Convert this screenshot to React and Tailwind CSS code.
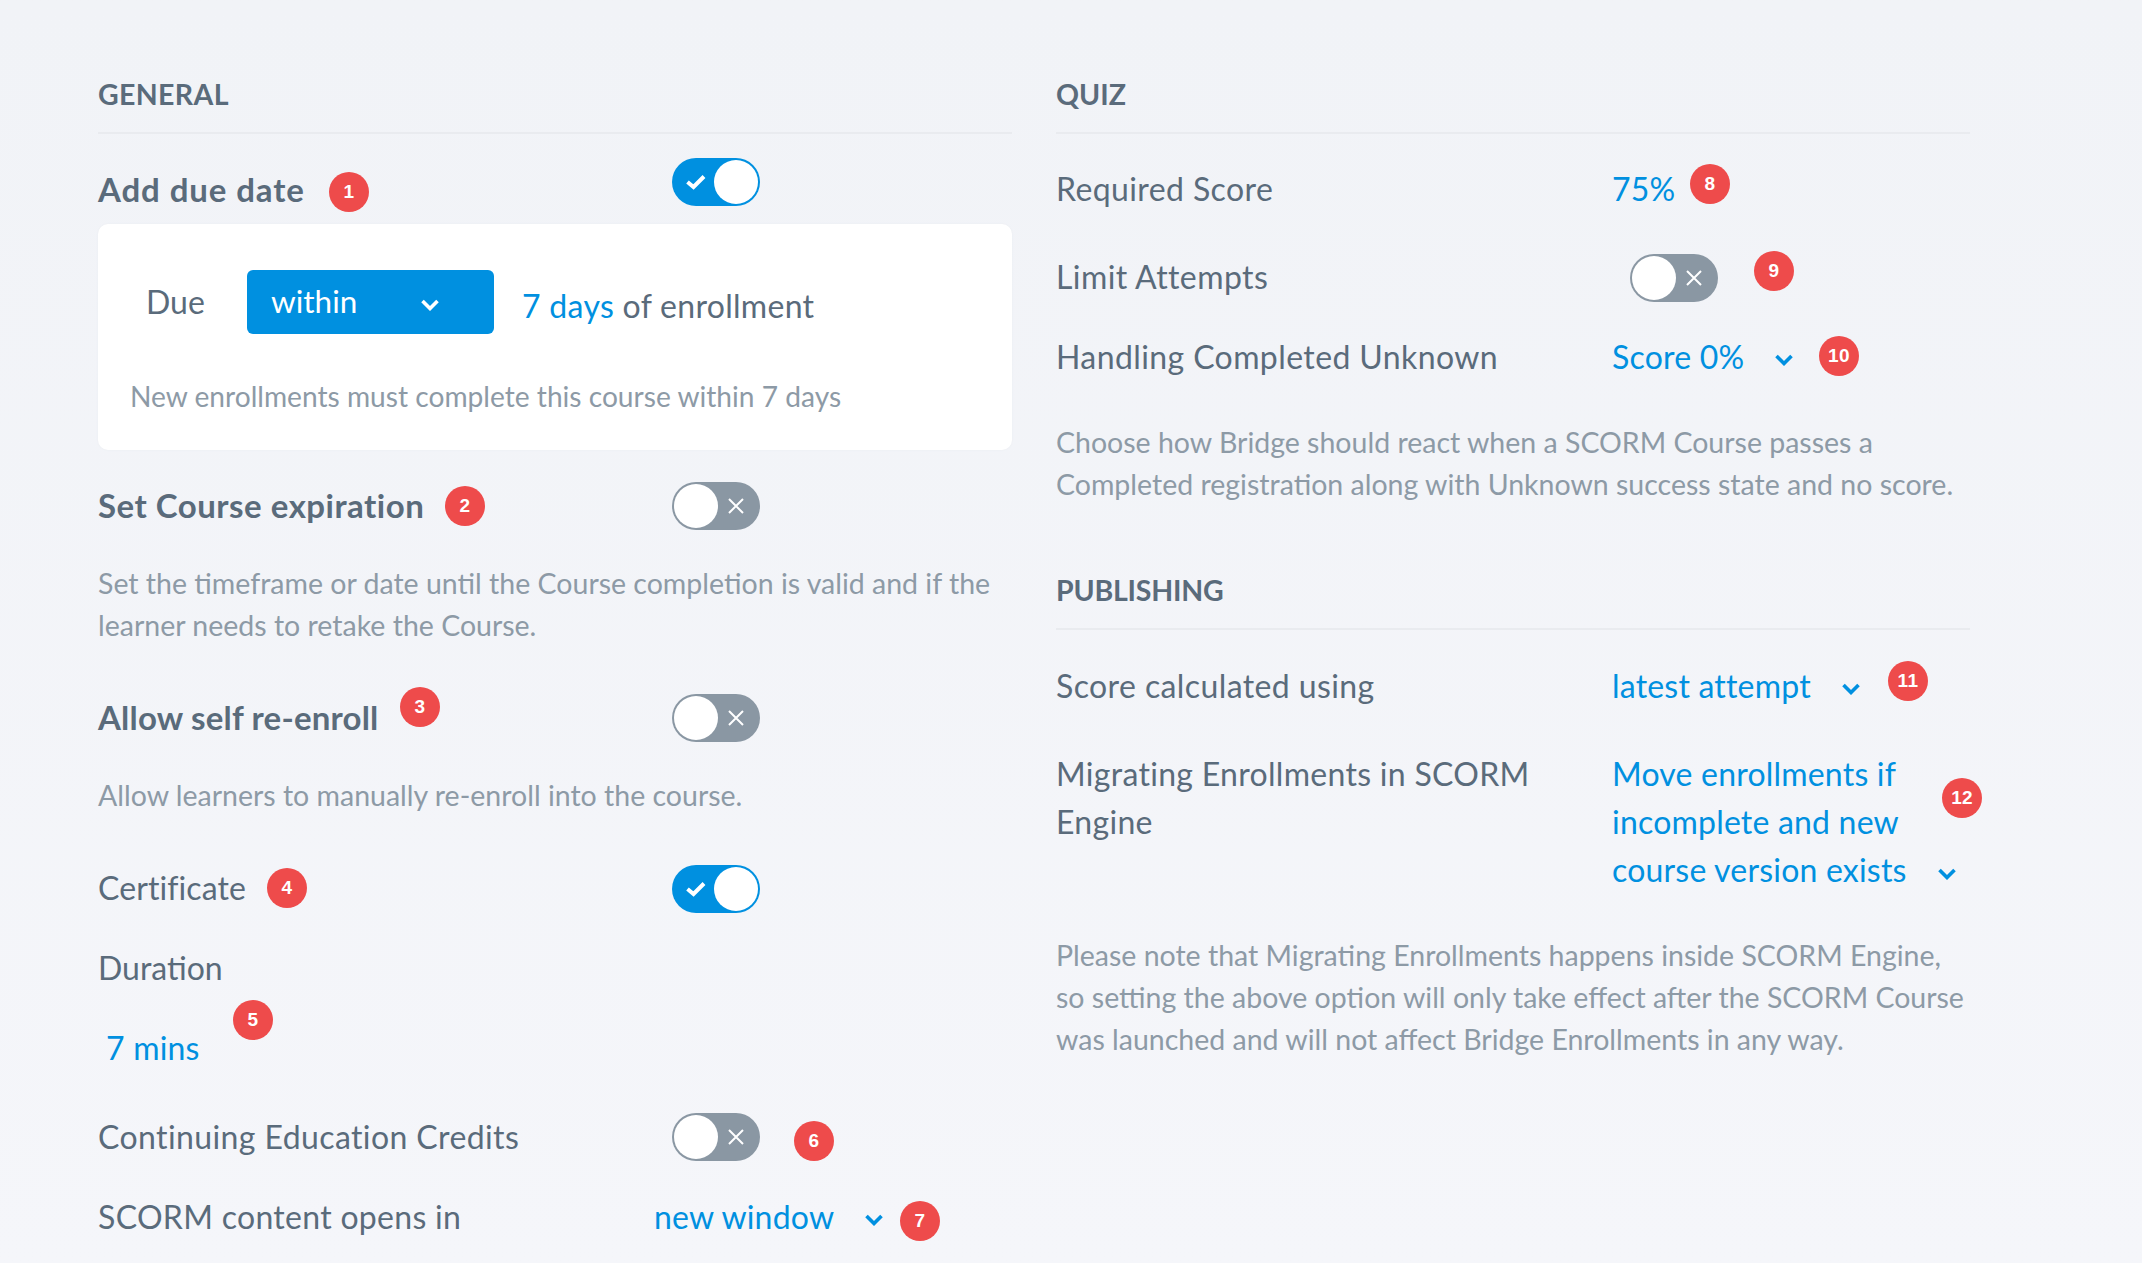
const FONT = "font-['Lato','Noto_Sans',sans-serif]";

function Badge({ n, className }) {
  return (
    <span className={"absolute flex h-10 w-10 items-center justify-center rounded-full bg-[#ee4b4b] text-[19px] font-bold text-white font-['Liberation_Sans',sans-serif] " + className}>
      {n}
    </span>
  );
}

function Chevron({ className = "", color = "#0090e0" }) {
  return (
    <svg viewBox="0 0 18 12" className={"h-[12px] w-[18px] shrink-0 " + className} fill="none" stroke={color} strokeWidth="3.6">
      <path d="M1.5 2 L9 9.5 L16.5 2" />
    </svg>
  );
}

function Toggle({ on, className = "" }) {
  if (on) {
    return (
      <span className={"flex h-12 w-[88px] shrink-0 items-center rounded-full bg-[#0090e0] pl-[14px] pr-[2px] " + className}>
        <svg viewBox="0 0 20 16" className="h-[16px] w-[20px]" fill="none" stroke="white" strokeWidth="4">
          <path d="M1.5 8 L7.5 13 L18 2.5" />
        </svg>
        <span className="ml-auto h-11 w-11 rounded-full bg-white" />
      </span>
    );
  }
  return (
    <span className={"flex h-12 w-[88px] shrink-0 items-center rounded-full bg-[#8a97a3] pl-[2px] pr-[16px] " + className}>
      <span className="h-11 w-11 rounded-full bg-white" />
      <svg viewBox="0 0 16 16" className="ml-auto h-[16px] w-[16px]" fill="none" stroke="white" strokeWidth="2">
        <path d="M1 1 L15 15 M15 1 L1 15" />
      </svg>
    </span>
  );
}

function Heading({ children, className = "" }) {
  return (
    <div className={"h-[61px] border-b-2 border-[#e9ebef] text-[28.5px] leading-[42px] font-bold text-[#5a6b7b] uppercase " + className}>
      {children}
    </div>
  );
}

function Desc({ children, className = "" }) {
  return <p className={"text-[28.5px] leading-[42px] text-[#8d9aa6] " + className}>{children}</p>;
}

function Row({ children, className = "" }) {
  return <div className={"relative flex h-12 items-center text-[32px] leading-[48px] tracking-[0.4px] text-[#5a6b7b] " + className}>{children}</div>;
}

function Value({ children, chevron }) {
  return (
    <div className="flex items-center tracking-[0.2px] text-[#0090e0]">
      <span>{children}</span>
      {chevron && <Chevron className="ml-[31px] mt-[6px]" />}
    </div>
  );
}

export default function App() {
  return (
    <div className={"grid h-[1263px] grid-cols-[914px_914px] gap-x-[44px] overflow-hidden bg-linear-to-b from-[#f1f3f7] to-[#f5f6fa] pl-[98px] pt-[73px] " + FONT}>
      <section>
        <Heading className="tracking-[0.35px]">General</Heading>
        <Row className="mt-[31px] font-bold">
          <span className="w-[574px] text-[33px] tracking-[0.9px]">Add due date</span>
          <Toggle on className="mb-[14px]" />
          <Badge n="1" className="left-[231px] top-[7px]" />
        </Row>
        <div className="mt-[11px] h-[226px] rounded-[10px] bg-white pl-[32px] pt-[46px] shadow-[0_0_2px_#e9ebef]">
          <div className="flex items-center">
            <span className="ml-[16px] w-[101px] text-[32px] leading-[64px] text-[#5a6b7b]">Due</span>
            <div className="flex h-16 w-[247px] items-center rounded-[6px] bg-[#0090e0] pl-[24px] text-[31.5px] text-white">
              <span className="w-[150px]">within</span>
              <Chevron color="white" className="mt-[6px] h-[10px] w-[15px]" />
            </div>
            <span className="ml-[28px] mt-[8px] text-[32px] tracking-[0.3px] text-[#5a6b7b]">
              <span className="text-[#0090e0]">7 days</span> of enrollment
            </span>
          </div>
          <p className="mt-[41px] text-[28.15px] leading-[42px] text-[#8d9aa6]">New enrollments must complete this course within 7 days</p>
        </div>
        <Row className="mt-[31px] font-bold">
          <span className="w-[574px] text-[33px] tracking-[0.5px]">Set Course expiration</span>
          <Toggle className="mt-[2px]" />
          <Badge n="2" className="left-[347px] top-[5px]" />
        </Row>
        <Desc className="mt-[33px]">Set the timeframe or date until the Course completion is valid and if the learner needs to retake the Course.</Desc>
        <Row className="mt-[47px] font-bold">
          <span className="w-[574px] text-[33px] tracking-[0.2px]">Allow self re-enroll</span>
          <Toggle className="mt-[2px]" />
          <Badge n="3" className="left-[302px] top-[-6px]" />
        </Row>
        <Desc className="mt-[33px]">Allow learners to manually re-enroll into the course.</Desc>
        <Row className="mt-[48px]">
          <span className="w-[574px] tracking-[0.1px]">Certificate</span>
          <Toggle on className="mt-[2px]" />
          <Badge n="4" className="left-[169px] top-[4px]" />
        </Row>
        <Row className="mt-[32px] tracking-[0px]">Duration</Row>
        <Row className="mt-[32px]">
          <span className="ml-[8px] tracking-[0.2px] text-[#0090e0]">7 mins</span>
          <Badge n="5" className="left-[135px] top-[-24px]" />
        </Row>
        <Row className="mt-[41px]">
          <span className="w-[574px]">Continuing Education Credits</span>
          <Toggle />
          <Badge n="6" className="left-[696px] top-[8px]" />
        </Row>
        <Row className="mt-[32px]">
          <span className="w-[556px] tracking-[0.3px]">SCORM content opens in</span>
          <Value chevron>new window</Value>
          <Badge n="7" className="left-[802px] top-[8px]" />
        </Row>
      </section>

      <section>
        <Heading>Quiz</Heading>
        <Row className="mt-[31px]">
          <span className="w-[556px]">Required Score</span>
          <Value>75%</Value>
          <Badge n="8" className="left-[634px] top-[-1px]" />
        </Row>
        <Row className="mt-[40px]">
          <span className="w-[574px]">Limit Attempts</span>
          <Toggle className="mt-[2px]" />
          <Badge n="9" className="left-[698px] top-[-2px]" />
        </Row>
        <Row className="mt-[32px]">
          <span className="w-[556px]">Handling Completed Unknown</span>
          <Value chevron>Score 0%</Value>
          <Badge n="10" className="left-[763px] top-[3px]" />
        </Row>
        <Desc className="mt-[40px]">Choose how Bridge should react when a SCORM Course passes a Completed registration along with Unknown success state and no score.</Desc>
        <Heading className="mt-[64px] tracking-[-0.2px]">Publishing</Heading>
        <Row className="mt-[32px]">
          <span className="w-[556px]">Score calculated using</span>
          <Value chevron>latest attempt</Value>
          <Badge n="11" className="left-[832px] top-[-1px]" />
        </Row>
        <div className="relative mt-[40px] flex text-[32px] leading-[48px] tracking-[0.3px]">
          <div className="w-[556px] shrink-0 pr-[40px] text-[#5a6b7b]">Migrating Enrollments in SCORM Engine</div>
          <div className="w-[358px] shrink-0 tracking-[0.2px] text-[#0090e0]">
            Move enrollments if incomplete and new course version exists
            <Chevron className="ml-[31px] inline-block" />
          </div>
          <Badge n="12" className="left-[886px] top-[28px]" />
        </div>
        <Desc className="mt-[40px]">Please note that Migrating Enrollments happens inside SCORM Engine, so setting the above option will only take effect after the SCORM Course was launched and will not affect Bridge Enrollments in any way.</Desc>
      </section>
    </div>
  );
}
